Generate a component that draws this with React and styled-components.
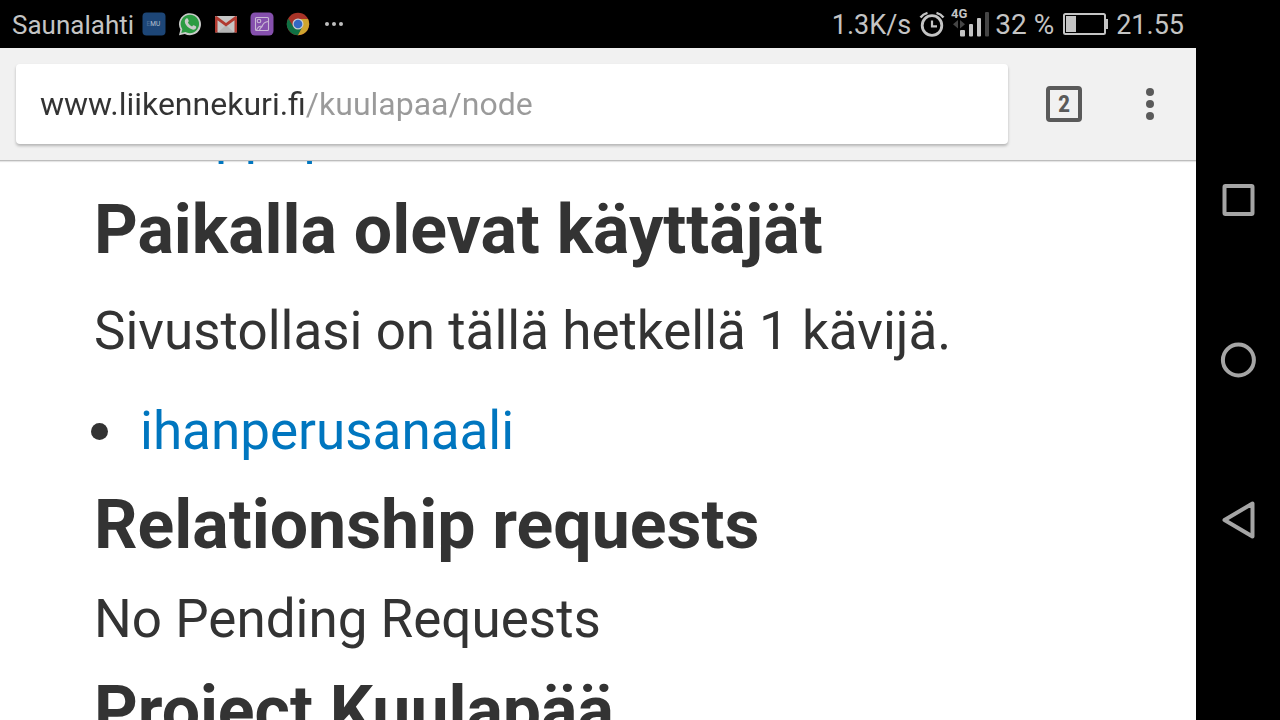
import React, {useState} from "react";
import styled, { createGlobalStyle } from "styled-components";

const App = () => {
  const [url, setUrl] = useState('www.liikennekuri.fi/kuulapaa/node')
  const urlHandler = (e) => {
    setUrl(e.target.value);
  };
  return(
    <Screen>
      <GlobalStyle/>
      <Browser>
        <StatusBar>
          <Notifications>
            <Carrier>Saunalahti</Carrier>
            <AppIcons>
              <EmuIcon/>
              <WhatsappIcon/>
              <GmailIcon/>
              <GalleryIcon/>
              <ChromeIcon/>
              <MoreIcon/>
            </AppIcons>
          </Notifications>
          <System>
            <Clock>1.3K/s</Clock>
            <Signal>
              <AlarmIcon/>
              <SignalIcon/>
              <Percent>32 %</Percent>
            </Signal>
            <BatteryIcon/>
            <Clock>21.55</Clock>
          </System>
        </StatusBar>
        <Toolbar>
          <UrlBox>
            <Url type='text' aria-label='Osoite' spellCheck={false} value={url} onChange={urlHandler}/>
          </UrlBox>
          <TabsBtn aria-label='Välilehdet'><TabCount>2</TabCount></TabsBtn>
          <MenuBtn aria-label='Valikko'>
            <svg width="8" height="32" viewBox="0 0 8 32" fill="#5a5a5a">
              <circle cx="4" cy="4" r="4"/>
              <circle cx="4" cy="16" r="4"/>
              <circle cx="4" cy="28" r="4"/>
            </svg>
          </MenuBtn>
        </Toolbar>
        <Page>
          <Content>
            <List $scrolled>
              <Item><Link href="#">Mappapa</Link></Item>
            </List>
            <Title>Paikalla olevat käyttäjät</Title>
            <Text $spaced>Sivustollasi on tällä hetkellä 1 kävijä.</Text>
            <List>
              <Item><Link href="#">ihanperusanaali</Link></Item>
            </List>
            <Title>Relationship requests</Title>
            <Text>No Pending Requests</Text>
            <Title>Project Kuulapää</Title>
          </Content>
        </Page>
      </Browser>
      <NavBar>
        <NavBtn aria-label='Viimeisimmät'>
          <svg width="36" height="36" viewBox="0 0 36 36" fill="none" stroke="#a5a5a5" strokeWidth="4">
            <rect x="4.500" y="4" width="28" height="28" rx="1"/>
          </svg>
        </NavBtn>
        <NavBtn aria-label='Koti'>
          <svg width="36" height="36" viewBox="0 0 36 36" fill="none" stroke="#a5a5a5" strokeWidth="4">
            <circle cx="18.400" cy="18" r="15.500"/>
          </svg>
        </NavBtn>
        <NavBtn aria-label='Takaisin'>
          <svg width="36" height="40" viewBox="0 0 36 40" fill="none" stroke="#a5a5a5" strokeWidth="4" strokeLinejoin="round">
            <path d="M32.500 3.500V36.500L4.500 20Z"/>
          </svg>
        </NavBtn>
      </NavBar>
    </Screen>
  )
}

export default App;

const EmuIcon = () => (
  <svg width="24" height="24" viewBox="0 0 24 24">
    <rect x="0.500" y="0.500" width="23" height="23" rx="4" fill="#1d4677"/>
    <text x="4.500" y="14" fontSize="6.500" fontFamily="Roboto, sans-serif" fill="#4f7197">E<tspan fill="#b9c4d2">MU</tspan></text>
  </svg>
)

const WhatsappIcon = () => (
  <svg width="24" height="24" viewBox="0 0 24 24">
    <path d="M1 23.300L2.400 17.600A11 11 0 1 1 6.800 21.900Z" fill="#c9cbc9"/>
    <path d="M3.300 21L4.300 17.200A9.200 9.200 0 1 1 7.400 20Z" fill="#2b9c42"/>
    <path d="M8.300 6.500c.6-.5 1.300-.4 1.600.3l.8 1.900c.2.500-.2 1.100-.8 1.700.9 1.800 2.300 3.100 4.200 4 .7-.9 1.200-1.300 1.700-1.100l2 1c.7.4.5 2-.4 2.700-1.600 1.300-4.100.6-6.600-1.200-2.300-1.700-4-4.200-4-6.300 0-1.200.6-2.300 1.500-3z" fill="#c9cbc9"/>
  </svg>
)

const GmailIcon = () => (
  <svg width="24" height="24" viewBox="0 0 24 24">
    <rect x="1" y="4" width="22" height="16.500" rx="1" fill="#c5c5c5"/>
    <path d="M4 20.500L12 13L20 20.500Z" fill="#b4b4b4"/>
    <path d="M1 20.500V5.500Q1 4 2.500 4L12 11L21.500 4Q23 4 23 5.500V20.500H20.500V8.200L12 14.500L3.500 8.200V20.500Z" fill="#b13a30"/>
  </svg>
)

const GalleryIcon = () => (
  <svg width="24" height="24" viewBox="0 0 24 24">
    <rect x="0.500" y="0.500" width="23" height="23" rx="4.500" fill="#8550ad"/>
    <g fill="none" stroke="#c9b9d4" strokeWidth="1.100">
      <rect x="5.500" y="5.500" width="13" height="13" rx="1"/>
      <circle cx="9" cy="9" r="1.800"/>
      <path d="M6.500 18.200C8 14.500 9.500 13.500 12 14.500C13 11.500 15 9.800 18.300 9.500M9.500 18.200C10 16.300 10.800 15.500 12 14.500"/>
    </g>
  </svg>
)

const ChromeIcon = () => (
  <svg width="24" height="24" viewBox="0 0 24 24">
    <circle cx="12" cy="12" r="11.200" fill="#a83327"/>
    <path d="M2.300 6.400A11.200 11.200 0 0 0 12 23.200L16.800 14.800L7.200 14.500Z" fill="#0f7043"/>
    <path d="M12 7H22A11.200 11.200 0 0 1 12 23.200L16.500 14.800Z" fill="#cfa52f"/>
    <circle cx="12" cy="12" r="5.500" fill="#c9cdd2"/>
    <circle cx="12" cy="12" r="4.300" fill="#3468c4"/>
  </svg>
)

const MoreIcon = () => (
  <svg width="24" height="24" viewBox="0 0 24 24" fill="#bebebe">
    <circle cx="5" cy="12" r="2"/>
    <circle cx="12" cy="12" r="2"/>
    <circle cx="19" cy="12" r="2"/>
  </svg>
)

const AlarmIcon = () => (
  <svg width="26" height="26" viewBox="0 0 26 26" fill="none" stroke="#c4c4c4">
    <circle cx="13" cy="14.500" r="9.800" strokeWidth="2.800"/>
    <path d="M13 9.500V15.300H18" strokeWidth="2.200"/>
    <path d="M1.500 6.500Q4 3 8.500 1.800M24.500 6.500Q22 3 17.500 1.800" strokeWidth="2.400"/>
  </svg>
)

const SignalIcon = () => (
  <svg width="38" height="32" viewBox="0 0 38 32">
    <text x="0" y="10" fontSize="13" fontWeight="700" fontFamily="Roboto, sans-serif" fill="#c4c4c4">4G</text>
    <path d="M7 12V20.500L2 16.300ZM9 12V20.500L14 16.300Z" fill="#454545"/>
    <rect x="9" y="22" width="5" height="6.500" rx="1" fill="#c4c4c4"/>
    <rect x="18" y="16" width="4" height="12.500" rx="1" fill="#c4c4c4"/>
    <rect x="26" y="10" width="4" height="18.500" rx="1" fill="#c4c4c4"/>
    <rect x="34" y="4" width="4" height="24.500" rx="1" fill="#454545"/>
  </svg>
)

const BatteryIcon = () => (
  <svg width="45" height="24" viewBox="0 0 45 24">
    <rect x="1" y="2" width="41" height="20" rx="1.500" fill="none" stroke="#c4c4c4" strokeWidth="2"/>
    <rect x="3" y="4" width="10" height="16" fill="#c4c4c4"/>
    <rect x="43" y="7" width="2" height="10" fill="#c4c4c4"/>
  </svg>
)

const GlobalStyle = createGlobalStyle`
  * {
    box-sizing: border-box;
  }
  body {
    margin: 0;
    background-color: #000000;
    font-family: Roboto, "Liberation Sans", sans-serif;
  }
  button {
    padding: 0;
    border: none;
    background: transparent;
  }
`

const Screen = styled.div`
  width: 100%;
  height: 100vh;
  display: flex;
  overflow: hidden;
  background-color: #000000;
`

const Browser = styled.div`
  flex: 1;
  min-width: 0;
  display: flex;
  flex-direction: column;
  background-color: #ffffff;
`

const StatusBar = styled.header`
  height: 48px;
  flex-shrink: 0;
  display: flex;
  justify-content: space-between;
  padding: 0 12px;
  background-color: #000000;
  color: #c4c4c4;
`

const Notifications = styled.div`
  display: flex;
  align-items: center;
  gap: 8px;
`

const AppIcons = styled.div`
  display: flex;
  align-items: center;
  gap: 12px;
`

const System = styled.div`
  display: flex;
  align-items: center;
  gap: 8px;
`

const Signal = styled.div`
  display: flex;
  align-items: center;
  gap: 6px;
  padding-right: 1px;
`

const Carrier = styled.span`
  padding-top: 2px;
  font-size: 26px;
  line-height: 32px;
`

const Clock = styled.span`
  padding-top: 2px;
  font-size: 27px;
  line-height: 32px;
`

const Percent = styled.span`
  padding-top: 2px;
  font-size: 28px;
  line-height: 32px;
`

const Toolbar = styled.div`
  height: 112px;
  flex-shrink: 0;
  display: flex;
  align-items: center;
  padding: 0 16px;
  background-color: #f1f1f1;
  border-bottom: 1px solid #bdbdbd;
  box-shadow: 0 1px 1px rgba(0, 0, 0, 0.1);
  box-sizing: content-box;
`

const UrlBox = styled.div`
  flex: 1;
  height: 80px;
  display: flex;
  align-items: center;
  padding: 0 24px;
  background-color: #ffffff;
  border-radius: 4px;
  box-shadow: 0 2px 3px rgba(0, 0, 0, 0.25);
`

/* host part is dark, the path after it is grey */
const Url = styled.input`
  width: 100%;
  height: 48px;
  padding: 0;
  border: none;
  outline: none;
  font-family: inherit;
  font-size: 32px;
  color: transparent;
  background: linear-gradient(to right, #333333 266px, #9a9a9a 266px);
  background-clip: text;
`

const TabsBtn = styled.button`
  width: 112px;
  height: 80px;
  display: flex;
  align-items: center;
  justify-content: center;
`

const TabCount = styled.span`
  width: 36px;
  height: 36px;
  border: 4px solid #5a5a5a;
  border-radius: 4px;
  color: #5a5a5a;
  font-family: "Roboto Condensed", "Liberation Sans Narrow", Roboto, sans-serif;
  font-size: 24px;
  font-weight: 700;
  line-height: 29px;
  text-align: center;
`

const MenuBtn = styled.button`
  width: 60px;
  height: 80px;
  display: flex;
  align-items: center;
  justify-content: center;
`

const Page = styled.main`
  flex: 1;
  min-height: 0;
  overflow: hidden;
  color: #333333;
`

const Content = styled.div`
  padding: 0 94px;
`

const Title = styled.h2`
  margin: 0;
  font-size: 68px;
  font-weight: 700;
  line-height: 92px;
  white-space: nowrap;
`

const Text = styled.p`
  margin: ${(props) => (props.$spaced ? '15px 0 20px' : '8px 0 6px')};
  font-size: 53px;
  line-height: 80px;
  white-space: nowrap;
`

/* the scrolled list is mostly hidden behind the toolbar */
const List = styled.ul`
  margin: ${(props) => (props.$scrolled ? '-66px 0 9px -3px' : '0 0 8px -3px')};
  padding: 0;
  list-style: none;
  font-size: 53px;
  line-height: 80px;
`

const Item = styled.li`
  display: flex;
  align-items: center;
  gap: 32px;

  &::before {
    content: '';
    width: 17px;
    height: 17px;
    border-radius: 50%;
    background-color: #333333;
  }
`

const Link = styled.a`
  color: #0076bf;
  text-decoration: none;
`

const NavBar = styled.nav`
  width: 84px;
  flex-shrink: 0;
  display: flex;
  flex-direction: column;
  align-items: center;
  justify-content: center;
  background-color: #000000;
`

const NavBtn = styled.button`
  width: 84px;
  height: 160px;
  display: flex;
  align-items: center;
  justify-content: center;
`
